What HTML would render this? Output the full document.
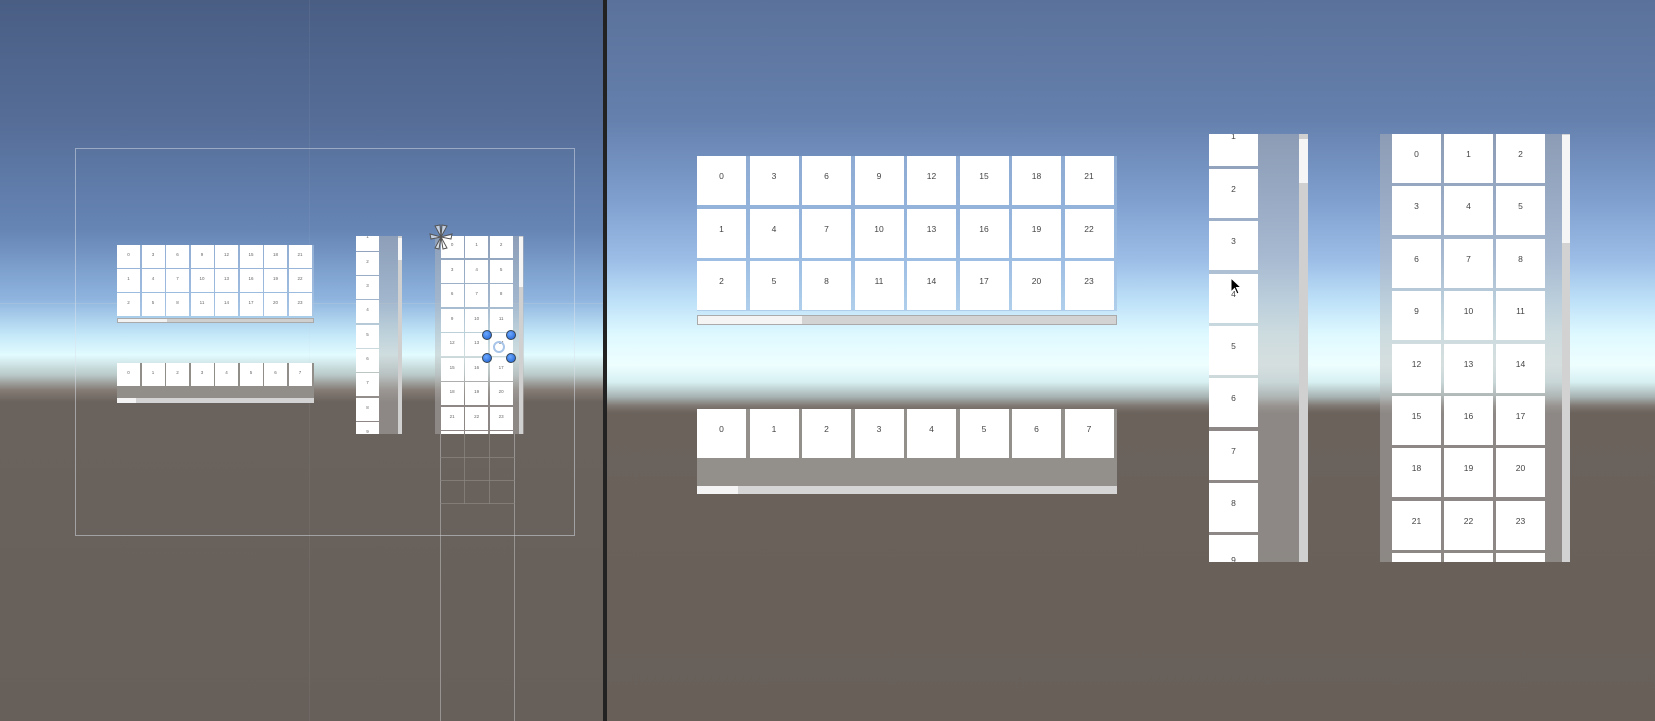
<!DOCTYPE html>
<html><head><meta charset="utf-8"><style>
*{margin:0;padding:0;box-sizing:border-box}
body{width:1655px;height:721px;overflow:hidden;position:relative;font-family:"Liberation Sans",sans-serif;background:#6a625c}
.abs{position:absolute}
.c{position:absolute;background:#fff;color:#444;text-align:center}
.R .c{font-size:8.5px;width:49px;height:49px;padding-top:15px}
.L .c{font-size:4.5px;width:23px;height:23px;padding-top:7px;color:#666}
.grid{position:absolute;display:flex;flex-wrap:wrap;align-content:flex-start}
.grid .c{position:static}
</style></head><body>
<div class="abs" style="left:0;top:0;width:603px;height:721px;overflow:hidden;background:linear-gradient(to bottom,#4a5e84 0px,#556d97 120px,#6685b5 230px,#8fb5df 300px,#c4e8f8 335px,#e2fbff 355px,#b9c9c8 375px,#857c76 390px,#6a625c 402px,#675f59 721px)">
 <div class="abs" style="left:75px;top:148px;width:500px;height:388px;border:1px solid rgba(220,225,235,.5)"></div>
 <div class="abs" style="left:0;top:303px;width:603px;height:1px;background:rgba(200,205,215,.3)"></div>
 <div class="abs" style="left:309px;top:0;width:1px;height:721px;background:rgba(200,205,215,.08)"></div>
 <div class="abs" style="left:440px;top:434px;width:1px;height:287px;background:rgba(210,210,210,.45)"></div>
 <div class="abs" style="left:514px;top:434px;width:1px;height:287px;background:rgba(210,210,210,.45)"></div>
 <div class="L">
 <div class="grid" style="left:117px;top:245px;width:197px;gap:1px 1.5px;background:rgba(170,195,225,.6)">
  <div class="c">0</div><div class="c">3</div><div class="c">6</div><div class="c">9</div><div class="c">12</div><div class="c">15</div><div class="c">18</div><div class="c">21</div>
  <div class="c">1</div><div class="c">4</div><div class="c">7</div><div class="c">10</div><div class="c">13</div><div class="c">16</div><div class="c">19</div><div class="c">22</div>
  <div class="c">2</div><div class="c">5</div><div class="c">8</div><div class="c">11</div><div class="c">14</div><div class="c">17</div><div class="c">20</div><div class="c">23</div>
 </div>
 <div class="abs" style="left:117px;top:318px;width:197px;height:5px;background:#cfcfcf;border:1px solid #aaa"><div style="width:49px;height:3px;background:#f2f2f2"></div></div>
 <div class="abs" style="left:117px;top:363px;width:197px;height:36px;background:#918d89"></div>
 <div class="grid" style="left:117px;top:363px;width:197px;gap:1px 1.5px">
  <div class="c">0</div><div class="c">1</div><div class="c">2</div><div class="c">3</div><div class="c">4</div><div class="c">5</div><div class="c">6</div><div class="c">7</div>
 </div>
 <div class="abs" style="left:117px;top:398px;width:197px;height:5px;background:#d3d3d3"><div style="width:19px;height:5px;background:#f4f4f4"></div></div>
 <div class="abs" style="left:356px;top:236px;width:46px;height:198px;overflow:hidden;background:rgba(185,185,185,.45)">
  <div class="c" style="left:0;top:-8px;padding-top:6px">1</div><div class="c" style="left:0;top:15.5px">2</div><div class="c" style="left:0;top:40px">3</div><div class="c" style="left:0;top:64px">4</div><div class="c" style="left:0;top:88.5px">5</div><div class="c" style="left:0;top:113px">6</div><div class="c" style="left:0;top:137px">7</div><div class="c" style="left:0;top:161.5px">8</div><div class="c" style="left:0;top:186px">9</div>
  <div class="abs" style="left:42px;top:0;width:4px;height:198px;background:#d0d0d0"><div style="width:4px;height:22px;background:#f5f5f5;margin-top:2px"></div></div>
 </div>
 <div class="abs" style="left:435px;top:236px;width:89px;height:198px;overflow:hidden;background:rgba(185,185,185,.45)">
  <div class="grid" style="left:5.7px;top:-1px;width:75px;gap:1.5px 1.5px">
   <div class="c">0</div><div class="c">1</div><div class="c">2</div><div class="c">3</div><div class="c">4</div><div class="c">5</div><div class="c">6</div><div class="c">7</div><div class="c">8</div><div class="c">9</div><div class="c">10</div><div class="c">11</div><div class="c">12</div><div class="c">13</div><div class="c">14</div><div class="c">15</div><div class="c">16</div><div class="c">17</div><div class="c">18</div><div class="c">19</div><div class="c">20</div><div class="c">21</div><div class="c">22</div><div class="c">23</div><div class="c"></div><div class="c"></div><div class="c"></div>
  </div>
  <div class="abs" style="left:84px;top:0;width:4px;height:198px;background:#d0d0d0"><div style="width:4px;height:50px;background:#f5f5f5;margin-top:1px"></div></div>
 </div>
 <div class="abs" style="left:440px;top:434px;width:75px;height:70px;background:linear-gradient(rgba(140,135,130,.7),rgba(140,135,130,.7)) 0 23px/75px 1px no-repeat,linear-gradient(rgba(140,135,130,.7),rgba(140,135,130,.7)) 0 46px/75px 1px no-repeat,linear-gradient(rgba(140,135,130,.7),rgba(140,135,130,.7)) 0 69px/75px 1px no-repeat,linear-gradient(rgba(140,135,130,.7),rgba(140,135,130,.7)) 24px 0/1px 70px no-repeat,linear-gradient(rgba(140,135,130,.7),rgba(140,135,130,.7)) 49px 0/1px 70px no-repeat"></div>
 </div>
 <svg class="abs" style="left:426px;top:222px" width="30" height="30" viewBox="0 0 30 30"><g stroke="#555" stroke-width="1" fill="rgba(255,255,255,.6)"><path d="M15 15 L9 4 L14 3Z"/><path d="M15 15 L21 4 L16 3Z"/><path d="M15 15 L4 12 L5 17Z"/><path d="M15 15 L26 12 L25 17Z"/><path d="M15 15 L9 26 L13 27Z"/><path d="M15 15 L21 26 L17 27Z"/></g></svg>
 <div class="abs" style="left:487px;top:335px;width:24px;height:23px;border:1px solid rgba(255,255,255,.6)"></div>
 <div class="abs" style="left:493px;top:341px;width:12px;height:12px;border-radius:50%;border:2.5px solid #a8c4e8;background:transparent"></div>
 <div class="abs" style="left:482px;top:330px;width:10px;height:10px;border-radius:50%;background:radial-gradient(circle at 40% 35%,#6aa8ff,#1d5fd0);border:1px solid #345"></div>
 <div class="abs" style="left:506px;top:330px;width:10px;height:10px;border-radius:50%;background:radial-gradient(circle at 40% 35%,#6aa8ff,#1d5fd0);border:1px solid #345"></div>
 <div class="abs" style="left:482px;top:353px;width:10px;height:10px;border-radius:50%;background:radial-gradient(circle at 40% 35%,#6aa8ff,#1d5fd0);border:1px solid #345"></div>
 <div class="abs" style="left:506px;top:353px;width:10px;height:10px;border-radius:50%;background:radial-gradient(circle at 40% 35%,#6aa8ff,#1d5fd0);border:1px solid #345"></div>
</div>
<div class="abs" style="left:603px;top:0;width:4px;height:721px;background:#222"></div>
<div class="abs R" style="left:607px;top:0;width:1048px;height:721px;overflow:hidden;background:linear-gradient(to bottom,#5a729b 0px,#6580ad 120px,#7f9fcf 200px,#9cbde6 260px,#bde0f8 300px,#def9ff 335px,#eefeff 365px,#d7f0f2 382px,#a7b2b2 397px,#7e7670 406px,#6b625c 413px,#685f59 721px)">
</div>
<div class="R">
 <div class="grid" style="left:697px;top:156px;width:420px;height:155px;gap:3.5px 3.5px;background:rgba(160,190,225,.6)">
  <div class="c">0</div><div class="c">3</div><div class="c">6</div><div class="c">9</div><div class="c">12</div><div class="c">15</div><div class="c">18</div><div class="c">21</div>
  <div class="c">1</div><div class="c">4</div><div class="c">7</div><div class="c">10</div><div class="c">13</div><div class="c">16</div><div class="c">19</div><div class="c">22</div>
  <div class="c">2</div><div class="c">5</div><div class="c">8</div><div class="c">11</div><div class="c">14</div><div class="c">17</div><div class="c">20</div><div class="c">23</div>
 </div>
 <div class="abs" style="left:697px;top:315px;width:420px;height:10px;background:#d3d3d3;border:1px solid #aaa"><div style="width:104px;height:8px;background:#f4f4f4"></div></div>
 <div class="abs" style="left:697px;top:409px;width:420px;height:77px;background:#93908c"></div>
 <div class="grid" style="left:697px;top:409px;width:420px;gap:3.5px 3.5px">
  <div class="c">0</div><div class="c">1</div><div class="c">2</div><div class="c">3</div><div class="c">4</div><div class="c">5</div><div class="c">6</div><div class="c">7</div>
 </div>
 <div class="abs" style="left:697px;top:486px;width:420px;height:8px;background:#d5d5d5"><div style="width:41px;height:8px;background:#f4f4f4"></div></div>
 <div class="abs" style="left:1209px;top:134px;width:99px;height:428px;overflow:hidden;background:rgba(185,185,185,.45)">
  <div class="c" style="left:0;top:-17px;padding-top:14px">1</div>
  <div class="c" style="left:0;top:35px">2</div><div class="c" style="left:0;top:87.3px">3</div><div class="c" style="left:0;top:139.6px">4</div><div class="c" style="left:0;top:191.9px">5</div><div class="c" style="left:0;top:244.2px">6</div><div class="c" style="left:0;top:296.5px">7</div><div class="c" style="left:0;top:348.8px">8</div><div class="c" style="left:0;top:401px;padding-top:20px">9</div>
  <div class="abs" style="left:90px;top:0;width:9px;height:428px;background:#d0d0d0"><div style="width:9px;height:44px;background:#f5f5f5;margin-top:5px"></div></div>
 </div>
 <svg class="abs" style="left:1230px;top:277px" width="14" height="20" viewBox="0 0 14 20"><path d="M1 1 L1 15 L4.5 11.5 L7 17 L9 16 L6.5 10.5 L11 10.5 Z" fill="#000" stroke="#fff" stroke-width="1"/></svg>
 <div class="abs" style="left:1380px;top:134px;width:190px;height:428px;overflow:hidden;background:rgba(185,185,185,.45)">
  <div class="grid" style="left:12px;top:0;width:160px;gap:3.4px 3px">
   <div class="c">0</div><div class="c">1</div><div class="c">2</div><div class="c">3</div><div class="c">4</div><div class="c">5</div><div class="c">6</div><div class="c">7</div><div class="c">8</div><div class="c">9</div><div class="c">10</div><div class="c">11</div><div class="c">12</div><div class="c">13</div><div class="c">14</div><div class="c">15</div><div class="c">16</div><div class="c">17</div><div class="c">18</div><div class="c">19</div><div class="c">20</div><div class="c">21</div><div class="c">22</div><div class="c">23</div><div class="c"></div><div class="c"></div><div class="c"></div>
  </div>
  <div class="abs" style="left:182px;top:0;width:8px;height:428px;background:#d2d2d2"><div style="width:8px;height:108px;background:#f5f5f5;margin-top:1px"></div></div>
 </div>
</div>
</body></html>
